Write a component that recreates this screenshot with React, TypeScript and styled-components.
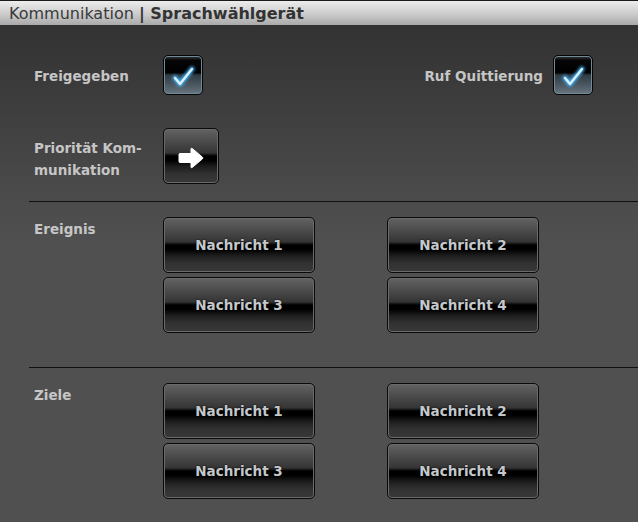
import React from 'react';
import styled, { createGlobalStyle } from 'styled-components';

const GlobalStyle = createGlobalStyle`
  html, body {
    margin: 0;
    padding: 0;
    background: #505050;
  }
  body {
    font-family: "DejaVu Sans", Verdana, sans-serif;
  }
`;

const Page = styled.div`
  width: 638px;
  height: 522px;
  display: flex;
  flex-direction: column;
  overflow: hidden;
`;

const TitleBar = styled.div`
  height: 24px;
  border-top: 1px solid #1a1a1a;
  background: linear-gradient(#ececec, #c8c8c8 60%, #a9a9a9);
  display: flex;
  align-items: center;
  padding-left: 9px;
  font-size: 16px;
  color: #3a3a3a;
  white-space: pre;
`;

const TitleStrong = styled.span`
  font-weight: bold;
  color: #333;
`;

const Body = styled.div`
  flex: 1;
  background: linear-gradient(#323232 0%, #4c4c4c 36%, #505050 45%, #505050 100%);
  padding: 30px 0 0 29px;
`;

const Row = styled.div`
  display: flex;
  align-items: center;
  justify-content: space-between;
  padding-left: 5px;
  padding-right: 45px;
`;

const Field = styled.div`
  display: flex;
  align-items: center;
  gap: 10px;
`;

const Label = styled.div<{ $width?: number; $offset?: number }>`
  font-size: 13.5px;
  font-weight: bold;
  line-height: 22px;
  color: #c6c6c6;
  width: ${p => (p.$width ? `${p.$width}px` : 'auto')};
  padding-top: ${p => p.$offset ?? 0}px;
  flex-shrink: 0;
`;

const CheckBox = styled.div`
  width: 40px;
  height: 40px;
  box-sizing: border-box;
  border: 1px solid #050505;
  border-radius: 5px;
  box-shadow: inset 0 0 0 1px #6f8a99;
  background: linear-gradient(#3a3a3a 0%, #050505 12%, #000 44%, #2f3a42 50%, #55626b 85%, #6a7780 100%);
  display: flex;
  align-items: center;
  justify-content: center;
`;

const SecondRow = styled(Row)`
  margin-top: 33px;
  justify-content: flex-start;
`;

const Glossy = styled.button<{ $w: number }>`
  width: ${p => p.$w}px;
  height: 56px;
  box-sizing: border-box;
  border: 1px solid #0a0a0a;
  border-radius: 5px;
  box-shadow: inset 0 0 0 1px #6a6a6a;
  background: linear-gradient(
    #636363 0%,
    #4c4c4c 22%,
    #353535 44%,
    #000 50%,
    #000 58%,
    #1e1e1e 70%,
    #323232 84%,
    #383838 100%
  );
  font-family: "DejaVu Sans", Verdana, sans-serif;
  font-size: 13.5px;
  font-weight: bold;
  color: #c4c8cc;
  text-shadow: 0 0 2px #000;
  padding: 0;
  display: flex;
  align-items: center;
  justify-content: center;
`;

const Separator = styled.div<{ $top: number }>`
  height: 1px;
  background: #111;
  margin-top: ${p => p.$top}px;
`;

const Section = styled.div`
  display: flex;
  align-items: flex-start;
  padding: 15px 0 0 5px;
`;

const ButtonGrid = styled.div`
  display: grid;
  grid-template-columns: 152px 152px;
  column-gap: 72px;
  row-gap: 4px;
`;

const Check = () => (
  <svg width="30" height="30" viewBox="0 0 30 30">
    <defs>
      <filter id="glow" x="-50%" y="-50%" width="200%" height="200%">
        <feGaussianBlur stdDeviation="1.6" />
      </filter>
    </defs>
    <polyline points="7,18 12,24 24,9" fill="none" stroke="#3fb4ff" strokeWidth="5"
      strokeLinecap="round" strokeLinejoin="round" filter="url(#glow)" />
    <polyline points="7,18 12,24 24,9" fill="none" stroke="#d8f2ff" strokeWidth="2.4"
      strokeLinecap="round" strokeLinejoin="round" />
  </svg>
);

const Arrow = () => (
  <svg width="26" height="22" viewBox="0 0 26 22" style={{ marginTop: 3 }}>
    <path
      d="M2 6.5 Q1 6.5 1 7.5 L1 14.5 Q1 15.5 2 15.5 L13 15.5 L13 20 Q13 21.3 14.2 20.5 L24.5 11.8 Q25.4 11 24.5 10.2 L14.2 1.5 Q13 0.7 13 2 L13 6.5 Z"
      fill="#ffffff"
      stroke="#ffffff"
      strokeWidth="1"
      strokeLinejoin="round"
    />
  </svg>
);

const buttons = ['Nachricht 1', 'Nachricht 2', 'Nachricht 3', 'Nachricht 4'];

const ButtonSection = ({ title }: { title: string }) => (
  <Section>
    <Label $width={129} $offset={1}>{title}</Label>
    <ButtonGrid>
      {buttons.map(b => <Glossy key={b} $w={152}>{b}</Glossy>)}
    </ButtonGrid>
  </Section>
);

export default function App() {
  return (
    <>
      <GlobalStyle />
      <Page>
        <TitleBar>
          Kommunikation <TitleStrong>| Sprachwählgerät</TitleStrong>
        </TitleBar>
        <Body>
          <Row>
            <Field>
              <Label $width={119} $offset={2}>Freigegeben</Label>
              <CheckBox><Check /></CheckBox>
            </Field>
            <Field>
              <Label $offset={2}>Ruf Quittierung</Label>
              <CheckBox><Check /></CheckBox>
            </Field>
          </Row>
          <SecondRow>
            <Field>
              <Label $width={119} $offset={6}>Priorität Kom-<br />munikation</Label>
              <Glossy $w={56}><Arrow /></Glossy>
            </Field>
          </SecondRow>
          <Separator $top={17} />
          <ButtonSection title="Ereignis" />
          <Separator $top={34} />
          <ButtonSection title="Ziele" />
        </Body>
      </Page>
    </>
  );
}
